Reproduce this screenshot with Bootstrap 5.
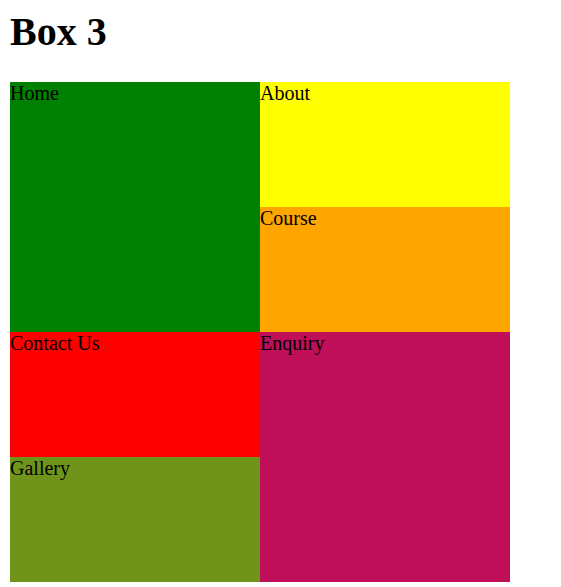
<!DOCTYPE html>
<html lang="en">
<head>
<meta charset="utf-8">
<meta name="viewport" content="width=device-width, initial-scale=1">
<title>Box 3</title>
<link href="https://cdn.jsdelivr.net/npm/bootstrap@5.3.0/dist/css/bootstrap.min.css" rel="stylesheet">
<style>
  body {
    font-family: "Liberation Serif", "Times New Roman", serif;
    font-size: 20px;
    line-height: 23px;
    color: #000;
    background: #fff;
    padding: 8px 10px 5px;
  }
  .page-title {
    font-size: 40px;
    line-height: 47px;
    font-weight: 700;
    margin-bottom: 27px;
  }
  .box-grid { max-width: 500px; }
  .tile { min-height: 125px; }
  .tile-tall { min-height: 250px; }
  .tile-home { background: #008000; }
  .tile-about { background: #ffff00; }
  .tile-course { background: #ffa500; }
  .tile-contact { background: #ff0000; }
  .tile-gallery { background: #6f9419; }
  .tile-enquiry { background: #bf0f58; }
</style>
</head>
<body>
<h1 class="page-title">Box 3</h1>
<main class="box-grid">
  <div class="row g-0">
    <div class="col-6 tile-tall tile-home">Home</div>
    <div class="col-6">
      <div class="tile tile-about">About</div>
      <div class="tile tile-course">Course</div>
    </div>
  </div>
  <div class="row g-0">
    <div class="col-6">
      <div class="tile tile-contact">Contact Us</div>
      <div class="tile tile-gallery">Gallery</div>
    </div>
    <div class="col-6 tile-tall tile-enquiry">Enquiry</div>
  </div>
</main>
<script src="https://cdn.jsdelivr.net/npm/bootstrap@5.3.0/dist/js/bootstrap.bundle.min.js"></script>
</body>
</html>
